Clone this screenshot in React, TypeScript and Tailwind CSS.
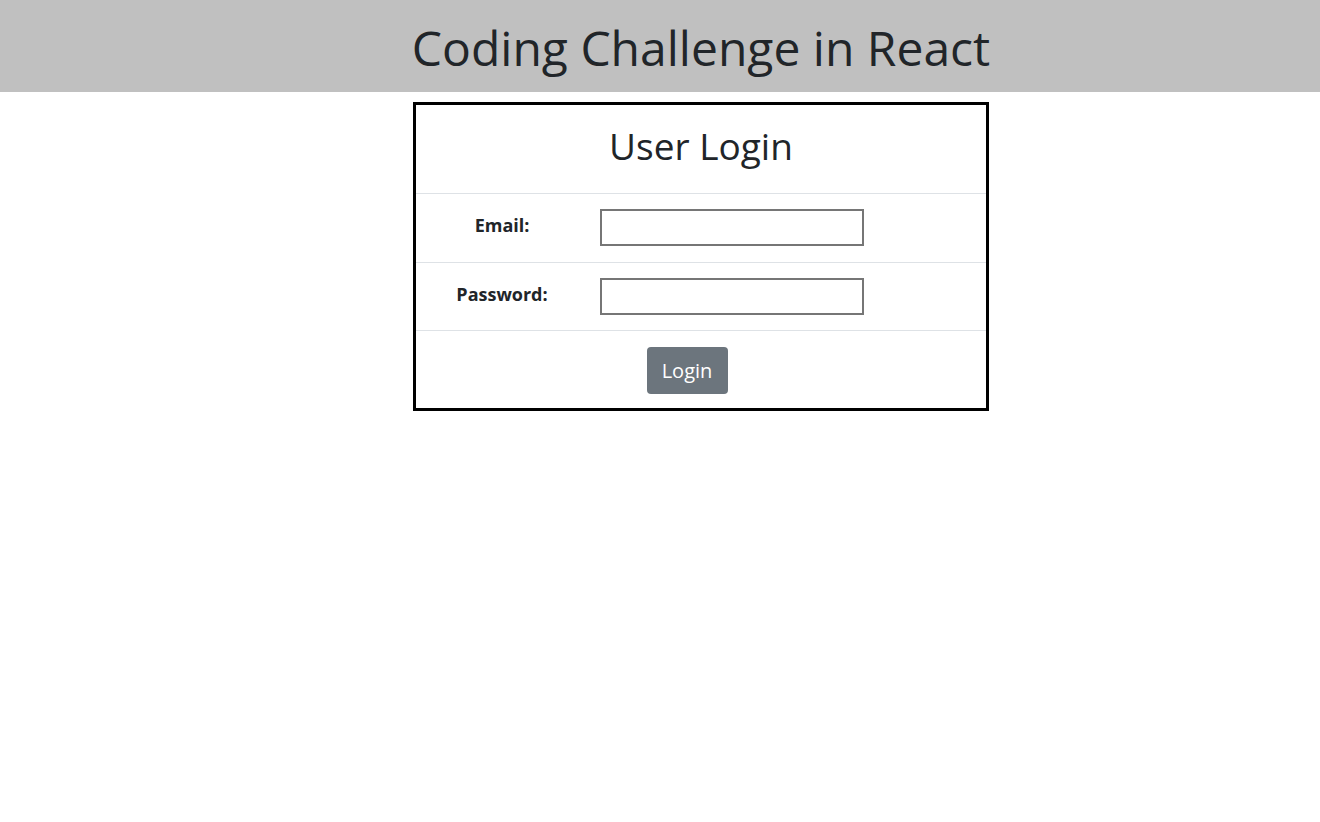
export default function App() {
  return (
    <div className="min-h-screen bg-white text-[#212529] font-['Open_Sans',sans-serif]">
      {/* Page header */}
      <header className="h-[92px] bg-[#c0c0c0]">
        <div className="ml-[413px] w-[576px] flex justify-center pt-[19px]">
          <h1 className="whitespace-nowrap text-[48px] leading-[1.2] font-normal">Coding Challenge in React</h1>
        </div>
      </header>

      {/* Login table */}
      <div className="ml-[413px] mt-[10px] w-[576px] border-[3px] border-black">
        <div className="h-[88px] flex justify-center pt-[19px]">
          <h2 className="text-[37px] leading-[1.2] font-normal">User Login</h2>
        </div>

        <div className="grid grid-cols-[172px_1fr] border-t border-[#dee2e6] h-[69px]">
          <div className="flex justify-center pt-[18px] text-[18px] font-bold">Email:</div>
          <div className="pt-[15px] pl-[12px]">
            <input type="text" className="w-[264px] h-[37px] border-2 border-[#767676] bg-white outline-none" />
          </div>
        </div>

        <div className="grid grid-cols-[172px_1fr] border-t border-[#dee2e6] h-[68px]">
          <div className="flex justify-center pt-[18px] text-[18px] font-bold">Password:</div>
          <div className="pt-[15px] pl-[12px]">
            <input type="password" className="w-[264px] h-[37px] border-2 border-[#767676] bg-white outline-none" />
          </div>
        </div>

        <div className="border-t border-[#dee2e6] h-[78px] flex justify-center pt-[16px]">
          <button className="ml-[-28px] h-[47px] w-[81px] rounded bg-[#6c757d] text-white text-[20px]">Login</button>
        </div>
      </div>
    </div>
  );
}
